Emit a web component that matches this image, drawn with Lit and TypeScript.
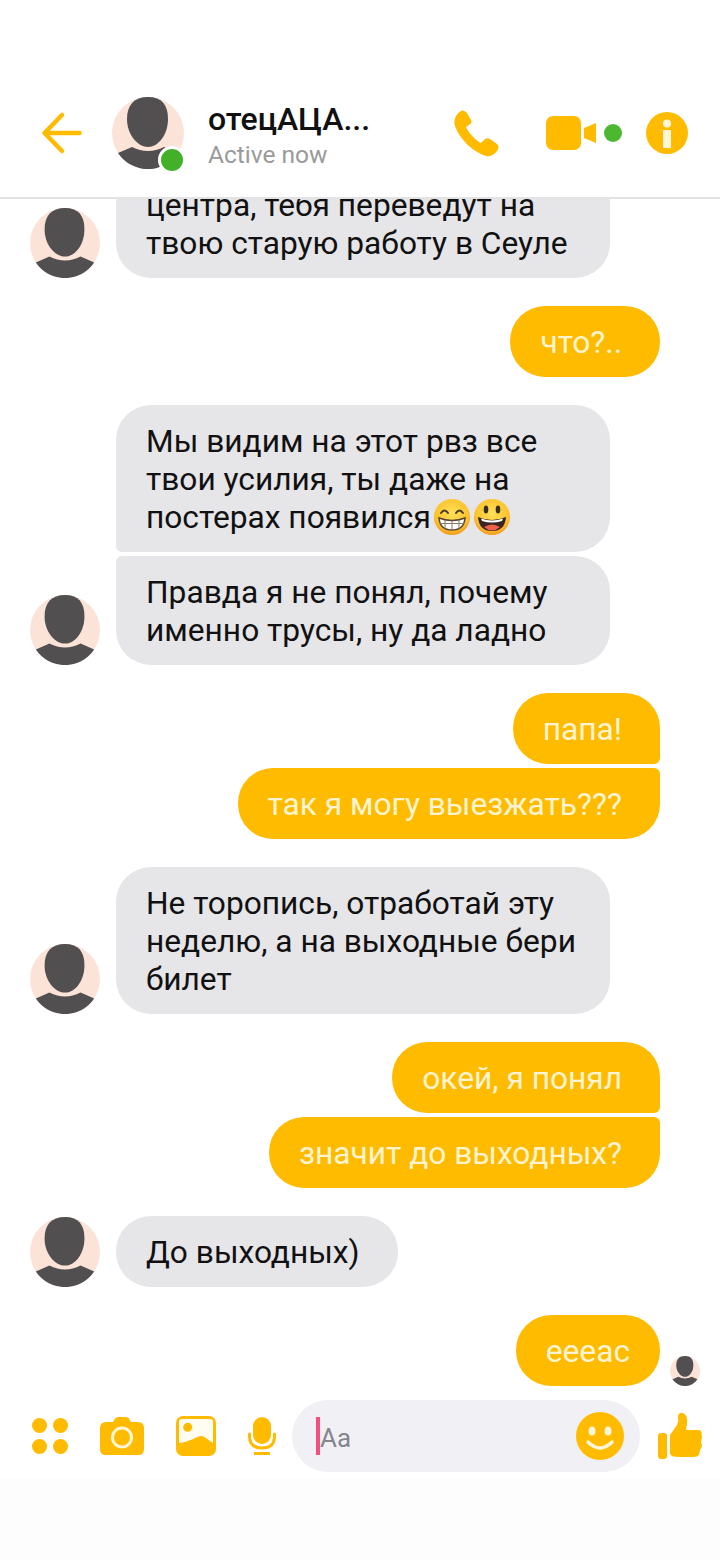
import { LitElement, html, css } from "lit";
import { customElement } from "lit/decorators.js";

const Y = "#ffbb00";

const avatar = (cls: string) => html`<svg class=${cls} viewBox="0 0 72 72" aria-hidden="true">
  <circle cx="36" cy="36" r="36" fill="#fbe3d8"></circle>
  <path d="M36 0C50 0 56 8 56 22C56 38 46 50 36 50C26 50 15 38 15 22C15 8 22 0 36 0Z" fill="#514f50"></path>
  <path d="M6 56L20 50Q36 58 52 50L66 56A36 36 0 0 1 6 56Z" fill="#514f50"></path>
</svg>`;

const grin = html`<svg class="emoji" viewBox="0 0 38 38" aria-hidden="true">
  <defs><radialGradient id="eg" cx="50%" cy="40%" r="60%"><stop offset="0" stop-color="#fee05a"></stop><stop offset="0.75" stop-color="#fcc32c"></stop><stop offset="1" stop-color="#f59a1b"></stop></radialGradient></defs>
  <circle cx="19" cy="19" r="18" fill="url(#eg)"></circle>
  <path d="M8 15Q11.500 10 15 15M23 15Q26.500 10 30 15" fill="none" stroke="#4a3a2a" stroke-width="2" stroke-linecap="round"></path>
  <path d="M6 20Q19 25 32 20Q31 32 19 32Q7 32 6 20Z" fill="#fff" stroke="#5a4630" stroke-width="1.500"></path>
  <path d="M6.500 25.500H31.500M12 22V31M19 23V32M26 22V31" stroke="#8a7a66" stroke-width="1" fill="none"></path>
</svg>`;

const smiley = html`<svg class="emoji" viewBox="0 0 38 38" aria-hidden="true">
  <circle cx="19" cy="19" r="18" fill="url(#eg)"></circle>
  <ellipse cx="13" cy="11.500" rx="2.300" ry="4" fill="#3a2c20"></ellipse>
  <ellipse cx="25" cy="11.500" rx="2.300" ry="4" fill="#3a2c20"></ellipse>
  <path d="M5 19Q19 25 33 19Q32 33 19 33Q6 33 5 19Z" fill="#3a2420"></path>
  <path d="M8 20.500Q19 24.500 30 20.500L29 23Q19 26 9 23Z" fill="#fff"></path>
  <path d="M11 29Q19 24 27 29Q23 32.500 19 32.500Q15 32.500 11 29Z" fill="#ef5f4c"></path>
</svg>`;

@customElement("app-root")
export class AppRoot extends LitElement {
  static styles = css`
    :host { display: block; width: 720px; height: 1560px; background: #fff; font-family: Roboto, "Noto Sans", sans-serif; overflow: hidden; }
    .page { display: flex; flex-direction: column; height: 1560px; }
    .header { height: 199px; flex: none; box-sizing: border-box; border-bottom: 2px solid #e3e3e5; display: flex; align-items: flex-start; padding-top: 97px; background: #fff; }
    .back { width: 44px; height: 44px; margin: 14px 0 0 41px; flex: none; }
    .hava { position: relative; width: 72px; height: 72px; margin-left: 27px; flex: none; }
    .hava-img { width: 72px; height: 72px; display: block; }
    .online { position: absolute; left: 46px; top: 49px; width: 22px; height: 22px; border-radius: 50%; background: #43b02a; border: 3px solid #fff; }
    .who { margin-left: 24px; width: 245px; flex: none; margin-top: 4px; }
    .name { font-size: 32px; font-weight: 500; line-height: 36px; color: #111; }
    .status { font-size: 24.500px; line-height: 30px; color: #9a9a9c; margin-top: 3px; }
    .phone { width: 46px; height: 48px; margin-top: 13px; flex: none; }
    .video { width: 50px; height: 36px; margin: 19px 0 0 47px; flex: none; }
    .vdot { width: 18px; height: 18px; border-radius: 50%; background: #4cb82f; margin: 27px 0 0 8px; flex: none; }
    .info { width: 42px; height: 42px; margin: 15px 0 0 24px; flex: none; }

    .messages { height: 1201px; flex: none; overflow: hidden; display: flex; flex-direction: column; justify-content: flex-end; }
    .row { display: flex; flex: none; }
    .row.sp { margin-top: 28px; }
    .row.tight { margin-top: 4px; }
    .row.in { padding-left: 30px; align-items: flex-end; }
    .row.out { justify-content: flex-end; padding-right: 60px; position: relative; }
    .ava { width: 70px; height: 70px; flex: none; display: block; }
    .gap { width: 70px; flex: none; }
    .seen { position: absolute; right: 20px; bottom: 0; width: 30px; height: 30px; display: block; }
    .bubble { box-sizing: border-box; font-size: 31.700px; line-height: 38px; padding: 17.500px 30px 15.500px; border-radius: 35px; max-width: 494px; }
    .bubble.one { padding-right: 38px; }
    .in .bubble { background: #e6e5e8; color: #111; margin-left: 16px; }
    .out .bubble { background: #ffbb00; color: #fff4d2; }
    .in .bubble.first { border-bottom-left-radius: 6px; }
    .in .bubble.last { border-top-left-radius: 6px; }
    .out .bubble.first { border-bottom-right-radius: 6px; }
    .out .bubble.last { border-top-right-radius: 6px; }
    .emoji { width: 38px; height: 38px; vertical-align: -4px; margin: -4px 0 -4px 2px; }

    .composer { flex: none; height: 78px; display: flex; align-items: flex-start; box-sizing: border-box; background: #fff; }
    .ic { flex: none; display: block; }
    .dots { width: 36px; height: 36px; margin: 18px 0 0 32px; }
    .cam { width: 44px; height: 38px; margin: 17px 0 0 32px; }
    .img { width: 40px; height: 40px; margin: 16px 0 0 32px; }
    .mic { width: 28px; height: 38px; margin: 17px 0 0 32px; }
    .input { width: 348px; height: 72px; margin-left: 16px; flex: none; border-radius: 36px; background: #f1f1f5; display: flex; align-items: center; box-sizing: border-box; padding-left: 24px; padding-right: 16px; }
    .caret { width: 4px; height: 38px; background: #f2517f; flex: none; }
    .ph { font-size: 26px; color: #85858c; flex: 1; padding-top: 3px; }
    .smile { width: 48px; height: 48px; }
    .thumb { width: 44px; height: 48px; margin: 12px 0 0 18px; }
    .foot { flex: 1; background: #fdfdfe; }
  `;

  render() {
    return html`<div class="page">
      <div class="header">
        <svg class="back" viewBox="0 0 44 44" aria-hidden="true"><path d="M21 4L3.500 22L21 40M4 22H38.500" fill="none" stroke=${Y} stroke-width="4.500" stroke-linecap="round" stroke-linejoin="round"></path></svg>
        <div class="hava">${avatar("hava-img")}<span class="online"></span></div>
        <div class="who"><div class="name">отецАЦА...</div><div class="status">Active now</div></div>
        <svg class="phone" viewBox="0 0 46 48" aria-hidden="true"><path d="M8 1C10 0 12 1 14 3L18 10C19 12 18 14 16 15L13 17C15 22 22 30 28 33L31 30C33 28 35 28 37 29L44 34C46 36 46 38 44 41C41 45 37 47 33 46C20 42 7 30 2 16C0 10 3 4 8 1Z" fill=${Y}></path></svg>
        <svg class="video" viewBox="0 0 50 36" aria-hidden="true"><rect x="0" y="0" width="35" height="34" rx="7" fill=${Y}></rect><path d="M38 12L50 7V27L38 22Z" fill=${Y}></path></svg>
        <span class="vdot"></span>
        <svg class="info" viewBox="0 0 42 42" aria-hidden="true"><circle cx="21" cy="21" r="21" fill=${Y}></circle><circle cx="21" cy="11.500" r="4" fill="#fff6d8"></circle><rect x="17" y="18" width="8" height="18" rx="1" fill="#fff6d8"></rect></svg>
      </div>

      <div class="messages">
        <div class="row in">${avatar("ava")}<div class="bubble">центра, тебя переведут на твою старую работу в Сеуле</div></div>
        <div class="row out sp"><div class="bubble one">что?..</div></div>
        <div class="row in sp"><span class="gap"></span><div class="bubble first">Мы видим на этот рвз все твои усилия, ты даже на постерах появился${grin}${smiley}</div></div>
        <div class="row in tight">${avatar("ava")}<div class="bubble last">Правда я не понял, почему именно трусы, ну да ладно</div></div>
        <div class="row out sp"><div class="bubble one first">папа!</div></div>
        <div class="row out tight"><div class="bubble one last">так я могу выезжать???</div></div>
        <div class="row in sp">${avatar("ava")}<div class="bubble">Не торопись, отработай эту неделю, а на выходные бери билет</div></div>
        <div class="row out sp"><div class="bubble one first">окей, я понял</div></div>
        <div class="row out tight"><div class="bubble one last">значит до выходных?</div></div>
        <div class="row in sp">${avatar("ava")}<div class="bubble one">До выходных)</div></div>
        <div class="row out sp"><div class="bubble">еееас</div>${avatar("seen")}</div>
        <div style="height:14px;flex:none"></div>
      </div>

      <div class="composer">
        <svg class="ic dots" viewBox="0 0 36 36" aria-hidden="true"><circle cx="7.500" cy="7.500" r="7.500" fill=${Y}></circle><circle cx="28.500" cy="7.500" r="7.500" fill=${Y}></circle><circle cx="7.500" cy="28.500" r="7.500" fill=${Y}></circle><circle cx="28.500" cy="28.500" r="7.500" fill=${Y}></circle></svg>
        <svg class="ic cam" viewBox="0 0 44 38" aria-hidden="true"><path d="M6 5H13L15 1.500Q16 0 18 0H26Q28 0 29 1.500L31 5H38Q44 5 44 11V32Q44 38 38 38H6Q0 38 0 32V11Q0 5 6 5Z" fill=${Y}></path><circle cx="22" cy="20.500" r="9.500" fill="none" stroke="#fff6d8" stroke-width="3"></circle></svg>
        <svg class="ic img" viewBox="0 0 40 40" aria-hidden="true"><rect x="0" y="0" width="40" height="40" rx="7" fill=${Y}></rect><path d="M6 3H34Q37 3 37 6V27C32 24 29 20 25.500 20C21 20 14 26 3 27V6Q3 3 6 3Z" fill="#fffdf2"></path><circle cx="11.700" cy="11.300" r="4.500" fill=${Y}></circle></svg>
        <svg class="ic mic" viewBox="0 0 28 38" aria-hidden="true"><rect x="5" y="0" width="18" height="27" rx="9" fill=${Y}></rect><path d="M1.500 17V19Q1.500 31 14 31Q26.500 31 26.500 19V17" fill="none" stroke=${Y} stroke-width="3" stroke-linecap="round"></path><rect x="6" y="35" width="16" height="3" fill=${Y}></rect></svg>
        <div class="input">
          <span class="caret"></span><span class="ph">Aa</span>
          <svg class="ic smile" viewBox="0 0 48 48" aria-hidden="true"><circle cx="24" cy="24" r="24" fill=${Y}></circle><ellipse cx="16" cy="19" rx="3.500" ry="4.500" fill="#fff6d8"></ellipse><ellipse cx="32" cy="19" rx="3.500" ry="4.500" fill="#fff6d8"></ellipse><path d="M12 30Q24 42 36 30" fill="none" stroke="#fff6d8" stroke-width="3.500" stroke-linecap="round"></path></svg>
        </div>
        <svg class="ic thumb" viewBox="0 0 44 48" aria-hidden="true"><rect x="0" y="21" width="9" height="26" rx="3" fill=${Y}></rect><path d="M12 23L19 13Q21 9 20 4Q21 0 25 1Q30 3 29 12L28 18H40Q44 18 43.500 22L44 25L43 30L44 34L42 38L41 43Q39 45 36 45H21Q13 45 12 42Z" fill=${Y}></path></svg>
      </div>
      <div class="foot"></div>
    </div>`;
  }
}
